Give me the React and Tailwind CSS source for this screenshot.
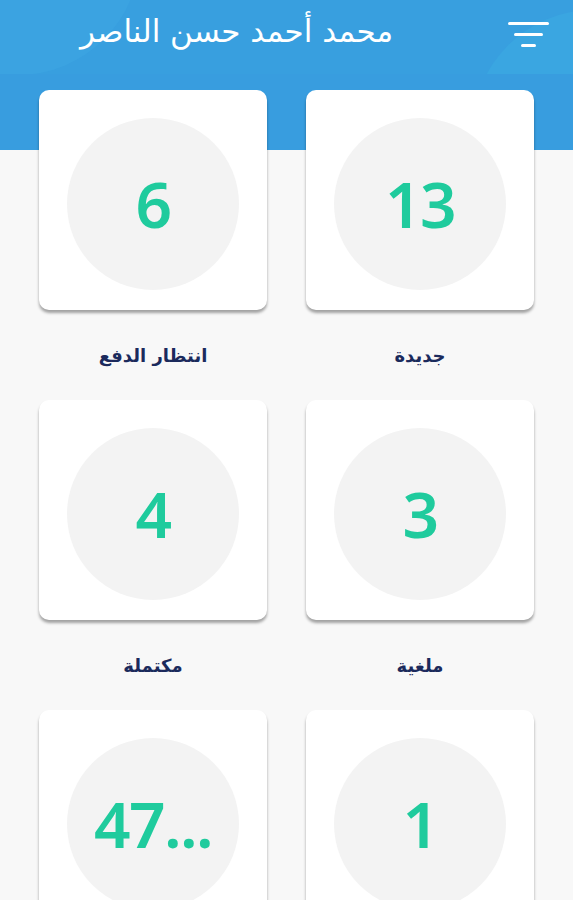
import React from 'react';

// order cards in reading order (rtl: first item sits on the right)
const stats = [
    { value: '13', label: 'جديدة' },
    { value: '6', label: 'انتظار الدفع' },
    { value: '3', label: 'ملغية' },
    { value: '4', label: 'مكتملة' },
    { value: '1', label: 'قيد التنفيذ' },
    { value: '47...', label: 'الكل' },
];

const FilterIcon = () => (
    <svg width="42" height="26" viewBox="0 0 42 26" fill="none">
        <rect x="0" y="0" width="41" height="3" rx="1.5" fill="white" />
        <rect x="6" y="11" width="29" height="3" rx="1.5" fill="white" />
        <rect x="13" y="22" width="15" height="3" rx="1.5" fill="white" />
    </svg>
);

const StatCard = ({ value, label }) => (
    <div className="flex flex-col">
        <div className="h-[220px] bg-white rounded-[10px] shadow-[0_3px_3px_rgba(0,0,0,0.35)] flex justify-center pt-[28px]">
            <div className="w-[172px] h-[172px] rounded-full bg-[#f3f3f3] flex items-center justify-center">
                <span
                    dir="ltr"
                    className="text-[64px] leading-none text-[#1fcb9d] font-semibold tracking-tight"
                    style={{ fontFamily: '"Noto Sans", "Open Sans", sans-serif' }}
                >
                    {value}
                </span>
            </div>
        </div>
        <div className="h-[90px] flex items-center justify-center">
            <span className="text-[18px] font-bold text-[#1b2a5c]">{label}</span>
        </div>
    </div>
);

const App = () => {
    return (
        <div
            dir="rtl"
            className="min-h-[900px] w-[573px] overflow-hidden bg-[linear-gradient(to_bottom,#389ddf_150px,#f8f8f8_150px)]"
            style={{ fontFamily: '"DejaVu Sans", "Noto Sans", sans-serif' }}
        >
            {/* Header */}
            <div className="relative h-[74px] overflow-hidden bg-[#389fdf]">
                <div className="absolute -left-[120px] -top-[170px] w-[260px] h-[245px] rounded-full bg-[#3ba3e1]" />
                <div className="absolute right-[-140px] top-[10px] w-[240px] h-[240px] rounded-full bg-[#3aa6e1]" />
                <div className="relative flex items-center h-full pr-[23px]">
                    <div className="w-[42px] flex items-center -mt-[4px]">
                        <FilterIcon />
                    </div>
                    <h1 className="mr-[115px] text-[31px] text-white font-normal -mt-[12px]">
                        محمد أحمد حسن الناصر
                    </h1>
                </div>
            </div>

            {/* Grid of cards */}
            <div className="grid grid-cols-2 gap-x-[39px] px-[39px] pt-[16px]">
                {stats.map((s) => (
                    <StatCard key={s.label} value={s.value} label={s.label} />
                ))}
            </div>
        </div>
    );
};

export default App;
